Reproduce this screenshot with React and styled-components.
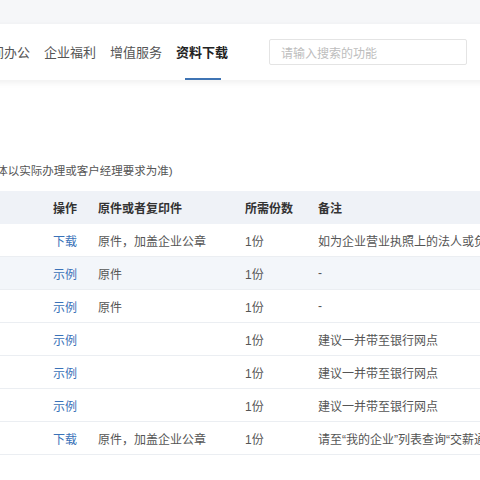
import React from "react";
import styled, { createGlobalStyle } from "styled-components";

const GlobalStyle = createGlobalStyle`
  html, body {
    margin: 0;
    padding: 0;
    background: #fff;
    overflow: hidden;
  }
  body {
    font-family: "Liberation Sans", "Noto Sans CJK SC", sans-serif;
    color: #555;
  }
`;

const navItems = ["空间办公", "企业福利", "增值服务", "资料下载"];

const rows = [
  {
    name: "营业执照",
    action: "下载",
    copy: "原件，加盖企业公章",
    count: "1份",
    note: "如为企业营业执照上的法人或负责人本人办理，可不提供",
  },
  { name: "法人身份证", action: "示例", copy: "原件", count: "1份", note: "-", shaded: true },
  { name: "经办人身份证", action: "示例", copy: "原件", count: "1份", note: "-" },
  { name: "公章", action: "示例", copy: "", count: "1份", note: "建议一并带至银行网点" },
  { name: "财务章", action: "示例", copy: "", count: "1份", note: "建议一并带至银行网点" },
  { name: "法人章", action: "示例", copy: "", count: "1份", note: "建议一并带至银行网点" },
  {
    name: "授权书",
    action: "下载",
    copy: "原件，加盖企业公章",
    count: "1份",
    note: "请至“我的企业”列表查询“交薪通”账号信息",
  },
];

const App = () => {
  return (
    <>
      <GlobalStyle />
      <Page>
        <TopBand />
        <NavBar>
          {navItems.map((item, i) => (
            <NavItem key={item} active={i === navItems.length - 1}>
              {item}
            </NavItem>
          ))}
          <Search placeholder="请输入搜索的功能" />
        </NavBar>
        <Main>
          <Note>(具体以实际办理或客户经理要求为准)</Note>
          <Table>
            <HeadRow>
              <Cell>材料名称</Cell>
              <Cell>操作</Cell>
              <Cell>原件或者复印件</Cell>
              <Cell>所需份数</Cell>
              <Cell>备注</Cell>
            </HeadRow>
            {rows.map((row) => (
              <Row key={row.name} shaded={row.shaded}>
                <Cell>{row.name}</Cell>
                <Cell>
                  <Link>{row.action}</Link>
                </Cell>
                <Cell>{row.copy}</Cell>
                <Cell>{row.count}</Cell>
                <Cell>{row.note}</Cell>
              </Row>
            ))}
          </Table>
        </Main>
      </Page>
    </>
  );
};

const Page = styled.div`
  width: 900px;
  margin-left: -160px;
  display: flex;
  flex-direction: column;
`;

const TopBand = styled.div`
  height: 24px;
  background: #f6f7f9;
`;

const NavBar = styled.div`
  height: 56px;
  display: flex;
  align-items: center;
  gap: 14px;
  padding-left: 138px;
  background: #fff;
  box-shadow: 0 2px 7px rgba(0, 0, 0, 0.07);
  position: relative;
  z-index: 1;
`;

const NavItem = styled.div`
  position: relative;
  height: 56px;
  display: flex;
  align-items: center;
  font-size: 13px;
  line-height: 1;
  color: ${(p) => (p.active ? "#222" : "#555")};
  font-weight: ${(p) => (p.active ? 700 : 400)};
  white-space: nowrap;
  &::after {
    content: "";
    display: ${(p) => (p.active ? "block" : "none")};
    position: absolute;
    left: 50%;
    bottom: 0;
    width: 36px;
    height: 2px;
    margin-left: -17px;
    background: #3f74b4;
  }
`;

const Search = styled.input`
  box-sizing: border-box;
  margin-left: 27px;
  width: 198px;
  height: 26px;
  padding: 0 11px;
  border: 1px solid #e4e4e4;
  border-radius: 2px;
  font-family: "Noto Sans CJK SC", sans-serif;
  font-size: 12px;
  outline: none;
  &::placeholder {
    color: #bdbdbd;
  }
`;

const Main = styled.div`
  padding-top: 81px;
  display: flex;
  flex-direction: column;
  gap: 10px;
`;

const Note = styled.div`
  padding-left: 141px;
  font-size: 11.5px;
  line-height: 20px;
  color: #555;
  white-space: nowrap;
`;

const Table = styled.div`
  display: flex;
  flex-direction: column;
`;

const Row = styled.div`
  box-sizing: border-box;
  display: grid;
  grid-template-columns: 213px 45px 147px 73px 1fr;
  height: 33px;
  align-items: center;
  font-size: 12px;
  color: #555;
  background: ${(p) => (p.shaded ? "#f3f6fa" : "#fff")};
  border-bottom: 1px solid #ebeef2;
`;

const HeadRow = styled(Row)`
  background: #eff2f7;
  border-bottom: none;
  font-weight: 700;
  color: #333;
`;

const Cell = styled.div`
  white-space: nowrap;
  overflow: hidden;
  &:first-child {
    padding-left: 16px;
  }
`;

const Link = styled.span`
  color: #3a72b8;
  cursor: pointer;
`;

export default App;
